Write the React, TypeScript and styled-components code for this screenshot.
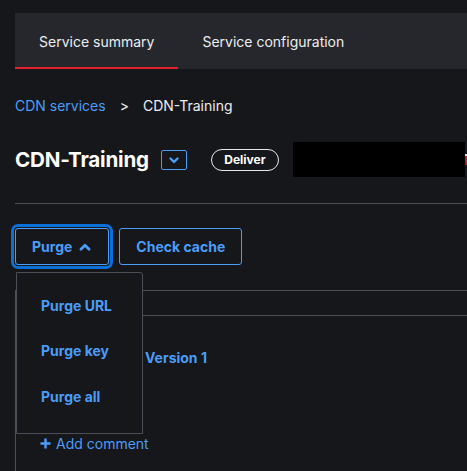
import React from "react";
import styled, { createGlobalStyle } from "styled-components";

const Global = createGlobalStyle`
  html, body { margin: 0; padding: 0; background: #16171b; overflow: hidden; }
  body { font-family: Inter, "Noto Sans", "Liberation Sans", sans-serif; color: #eceef1; }
  * { box-sizing: border-box; }
`;

const Page = styled.div`
  width: 467px;
  height: 471px;
  padding: 13px 0 0 15px;
  overflow: hidden;
`;

const TabBar = styled.div`
  display: flex;
  height: 56px;
  background: #25272c;
  width: 452px;
`;

const Tab = styled.div<{ $active?: boolean }>`
  display: flex;
  align-items: center;
  padding: 0 24px 0 24px;
  font-size: 14px;
  color: #eceef1;
  border-bottom: 2px solid ${(p) => (p.$active ? "#e5202e" : "transparent")};
  padding-top: 2px;
`;

const Breadcrumb = styled.div`
  display: flex;
  align-items: center;
  gap: 14px;
  margin-top: 26px;
  height: 20px;
  font-size: 14px;
`;

const Crumb = styled.span<{ $link?: boolean }>`
  color: ${(p) => (p.$link ? "#4a9df8" : "#eceef1")};
`;

const TitleRow = styled.div`
  display: flex;
  align-items: center;
  height: 35px;
  margin-top: 27px;
  white-space: nowrap;
  & > * { flex-shrink: 0; }
`;

const Title = styled.h1`
  margin: 0;
  font-size: 20.6px;
  font-weight: 700;
  color: #ffffff;
  letter-spacing: -0.2px;
`;

const Toggle = styled.div`
  margin-left: 12px;
  width: 26px;
  height: 20px;
  border: 1px solid #4a9df8;
  border-radius: 2px;
  display: flex;
  align-items: center;
  justify-content: center;
`;

const Pill = styled.div`
  margin-left: 24px;
  height: 22px;
  width: 68px;
  border: 1px solid #e6e8eb;
  border-radius: 11px;
  display: flex;
  align-items: center;
  justify-content: center;
  font-size: 12px;
  font-weight: 700;
  color: #ffffff;
`;

const Redacted = styled.div`
  margin-left: 14px;
  width: 172px;
  height: 35px;
  background: #000;
`;

const RedMark = styled.div`
  width: 8px;
  height: 11px;
  background: #b3202c;
  border-top: 2px solid #f0d0d4;
`;

const Divider = styled.div`
  margin-top: 26px;
  height: 1px;
  background: #4b4f58;
  width: 452px;
`;

const ActionRow = styled.div`
  position: relative;
  display: flex;
  gap: 10px;
  margin-top: 24px;
`;

const Button = styled.button<{ $focused?: boolean }>`
  height: 37px;
  padding: 0 16px;
  background: transparent;
  border: 1px solid #4a9df8;
  border-radius: 3px;
  color: #4a9df8;
  font-family: inherit;
  font-size: 14px;
  font-weight: 700;
  display: flex;
  align-items: center;
  gap: 6px;
  outline: ${(p) => (p.$focused ? "3px solid #0b6fd8" : "none")};
  outline-offset: 1px;
`;

const Menu = styled.div`
  position: absolute;
  left: 1px;
  top: 44px;
  width: 127px;
  height: 162px;
  padding: 11px 0 13px;
  background: #16171b;
  border: 1px solid #4b4f58;
  border-radius: 0 3px 0 0;
  z-index: 2;
  display: flex;
  flex-direction: column;
`;

const MenuItem = styled.div`
  height: 46px;
  display: flex;
  align-items: center;
  padding-left: 24px;
  padding-bottom: 2px;
  font-size: 14px;
  font-weight: 700;
  color: #4a9df8;
`;

const Panel = styled.div`
  margin-top: 25px;
  border-top: 1px solid #4b4f58;
  border-left: 1px solid #4b4f58;
  width: 452px;
  height: 200px;
`;

const PanelHead = styled.div`
  height: 25px;
  border-bottom: 1px solid #4b4f58;
`;

const VersionRow = styled.div`
  padding: 32px 0 0 129px;
  height: 20px;
  line-height: 20px;
  font-size: 14px;
  font-weight: 700;
  color: #4a9df8;
  box-sizing: content-box;
`;

const AddComment = styled.div`
  margin-top: 65px;
  padding-left: 24px;
  display: flex;
  align-items: center;
  gap: 5px;
  height: 20px;
  font-size: 14px;
  color: #4a9df8;
`;

const Chevron = ({ up, size = 12 }: { up?: boolean; size?: number }) => (
  <svg width={size} height={size} viewBox="0 0 12 12" fill="none">
    <path
      d={up ? "M2.5 8 L6 4.5 L9.5 8" : "M2.5 4.5 L6 8 L9.5 4.5"}
      stroke="#4a9df8"
      strokeWidth="2.4"
      strokeLinecap="round"
      strokeLinejoin="round"
    />
  </svg>
);

const Plus = () => (
  <svg width="11" height="11" viewBox="0 0 11 11">
    <path d="M5.5 0.5 V10.5 M0.5 5.5 H10.5" stroke="#4a9df8" strokeWidth="2.4" />
  </svg>
);

export default function App() {
  return (
    <>
      <Global />
      <Page>
        <TabBar>
          <Tab $active>Service summary</Tab>
          <Tab>Service configuration</Tab>
        </TabBar>
        <Breadcrumb>
          <Crumb $link>CDN services</Crumb>
          <Crumb>&gt;</Crumb>
          <Crumb>CDN-Training</Crumb>
        </Breadcrumb>
        <TitleRow>
          <Title>CDN-Training</Title>
          <Toggle>
            <Chevron />
          </Toggle>
          <Pill>Deliver</Pill>
          <Redacted />
          <RedMark />
        </TitleRow>
        <Divider />
        <ActionRow>
          <Button $focused>
            Purge
            <Chevron up size={14} />
          </Button>
          <Button>Check cache</Button>
          <Menu>
            <MenuItem>Purge URL</MenuItem>
            <MenuItem>Purge key</MenuItem>
            <MenuItem>Purge all</MenuItem>
          </Menu>
        </ActionRow>
        <Panel>
          <PanelHead />
          <VersionRow>Version 1</VersionRow>
          <AddComment>
            <Plus />
            Add comment
          </AddComment>
        </Panel>
      </Page>
    </>
  );
}
